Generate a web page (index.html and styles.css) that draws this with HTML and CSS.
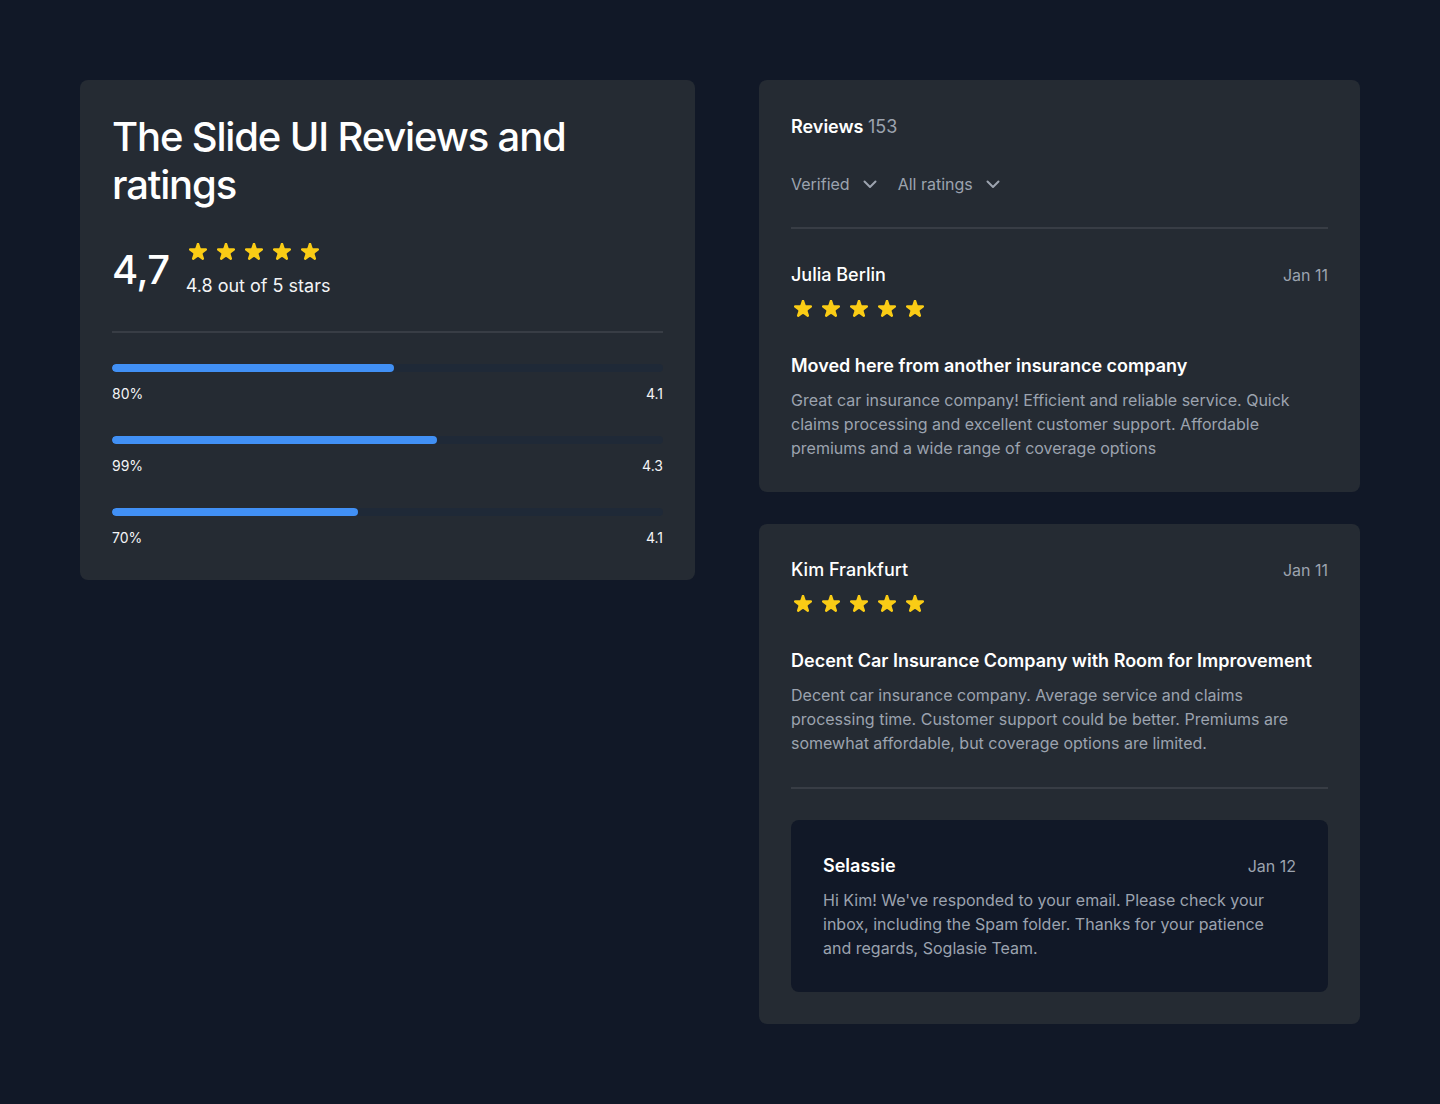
FILE: index.html
```html
<!DOCTYPE html>
<html lang="en">
<head>
<meta charset="utf-8">
<title>Reviews and ratings</title>
<link rel="stylesheet" href="styles.css">
</head>
<body>
<svg width="0" height="0" style="position:absolute">
  <defs>
    <symbol id="star" viewBox="2.2 2.2 15.6 15.6"><path d="M9.05 2.93c.3-.92 1.6-.92 1.9 0l1.07 3.29a1 1 0 0 0 .95.69h3.46c.97 0 1.37 1.24.59 1.81l-2.8 2.03a1 1 0 0 0-.36 1.12l1.07 3.29c.3.92-.76 1.69-1.54 1.12l-2.8-2.030a1 1 0 0 0-1.18 0l-2.8 2.03c-.78.57-1.83-.2-1.54-1.12l1.07-3.29a1 1 0 0 0-.36-1.12L2.98 8.72c-.78-.57-.38-1.81.59-1.81h3.46a1 1 0 0 0 .95-.69l1.07-3.29z"/></symbol>
    <symbol id="chev" viewBox="0 0 20 20"><path d="M4.5 7.5l5.5 5.5 5.5-5.5" fill="none" stroke="currentColor" stroke-width="2" stroke-linecap="round" stroke-linejoin="round"/></symbol>
  </defs>
</svg>
<main class="page">
  <section class="card summary">
    <h1 class="summary-title">The Slide UI Reviews and ratings</h1>
    <div class="score-row">
      <div class="score">4,7</div>
      <div class="score-detail">
        <div class="stars">
          <svg class="star"><use href="#star"/></svg>
          <svg class="star"><use href="#star"/></svg>
          <svg class="star"><use href="#star"/></svg>
          <svg class="star"><use href="#star"/></svg>
          <svg class="star"><use href="#star"/></svg>
        </div>
        <div class="score-text">4.8 out of 5 stars</div>
      </div>
    </div>
    <div class="divider"></div>
    <div class="bars">
      <div class="bar-item">
        <div class="track"><div class="fill" style="width:51.2%"></div></div>
        <div class="bar-labels"><span>80%</span><span>4.1</span></div>
      </div>
      <div class="bar-item">
        <div class="track"><div class="fill" style="width:59%"></div></div>
        <div class="bar-labels"><span>99%</span><span>4.3</span></div>
      </div>
      <div class="bar-item">
        <div class="track"><div class="fill" style="width:44.6%"></div></div>
        <div class="bar-labels"><span>70%</span><span>4.1</span></div>
      </div>
    </div>
  </section>

  <div class="reviews-col">
    <section class="card">
      <h2 class="reviews-head">Reviews <span class="count">153</span></h2>
      <div class="filters">
        <div class="filter">Verified <svg class="chev"><use href="#chev"/></svg></div>
        <div class="filter">All ratings <svg class="chev"><use href="#chev"/></svg></div>
      </div>
      <div class="divider divider-right"></div>
      <article class="review">
        <div class="review-top">
          <span class="name">Julia Berlin</span>
          <span class="date">Jan 11</span>
        </div>
        <div class="stars stars-review">
          <svg class="star"><use href="#star"/></svg>
          <svg class="star"><use href="#star"/></svg>
          <svg class="star"><use href="#star"/></svg>
          <svg class="star"><use href="#star"/></svg>
          <svg class="star"><use href="#star"/></svg>
        </div>
        <h3 class="review-title">Moved here from another insurance company</h3>
        <p class="review-body">Great car insurance company! Efficient and reliable service. Quick claims processing and excellent customer support. Affordable premiums and a wide range of coverage options</p>
      </article>
    </section>

    <section class="card">
      <article class="review">
        <div class="review-top">
          <span class="name">Kim Frankfurt</span>
          <span class="date">Jan 11</span>
        </div>
        <div class="stars stars-review">
          <svg class="star"><use href="#star"/></svg>
          <svg class="star"><use href="#star"/></svg>
          <svg class="star"><use href="#star"/></svg>
          <svg class="star"><use href="#star"/></svg>
          <svg class="star"><use href="#star"/></svg>
        </div>
        <h3 class="review-title">Decent Car Insurance Company with Room for Improvement</h3>
        <p class="review-body">Decent car insurance company. Average service and claims processing time. Customer support could be better. Premiums are somewhat affordable, but coverage options are limited.</p>
      </article>
      <div class="divider divider-reply"></div>
      <div class="reply">
        <div class="review-top">
          <span class="name">Selassie</span>
          <span class="date">Jan 12</span>
        </div>
        <p class="review-body">Hi Kim! We've responded to your email. Please check your inbox, including the Spam folder. Thanks for your patience and regards, Soglasie Team.</p>
      </div>
    </section>
  </div>
</main>
</body>
</html>
```

FILE: styles.css
```css
* { box-sizing: border-box; }
html, body {
  margin: 0;
  padding: 0;
  background: #111827;
  font-family: Inter, "Noto Sans", sans-serif;
  color: #ffffff;
}
.page {
  display: flex;
  align-items: flex-start;
  gap: 64px;
  padding: 80px 80px;
  width: 1440px;
}
.card {
  background: #252b33;
  border-radius: 8px;
  padding: 32px;
}
.summary {
  width: 615px;
  flex: none;
}
.summary-title {
  margin: 1px 0 -1px;
  font-size: 40px;
  line-height: 48px;
  font-weight: 500;
  letter-spacing: -1.15px;
  color: #fff;
  max-width: 520px;
}
.score-row {
  display: flex;
  align-items: center;
  gap: 16px;
  margin-top: 32px;
}
.score {
  font-size: 40px;
  line-height: 48px;
  font-weight: 500;
  letter-spacing: -0.5px;
}
.score-detail {
  display: flex;
  flex-direction: column;
  gap: 8px;
}
.stars {
  display: flex;
  gap: 4px;
  height: 24px;
}
.star {
  width: 24px;
  height: 24px;
  padding: 2.5px;
  fill: #facc15;
}
.score-text {
  font-size: 18px;
  line-height: 28px;
  color: #f3f4f6;
}
.divider {
  height: 2px;
  background: #383d45;
  margin: 31px 0;
}
.bars {
  display: flex;
  flex-direction: column;
  gap: 32px;
}
.bar-item {
  display: flex;
  flex-direction: column;
  gap: 12px;
}
.track {
  height: 8px;
  border-radius: 4px;
  background: #1f2937;
  overflow: hidden;
}
.fill {
  height: 100%;
  border-radius: 4px;
  background: #4190f5;
}
.bar-labels {
  display: flex;
  justify-content: space-between;
  font-size: 14px;
  line-height: 20px;
  color: #f3f4f6;
}
.reviews-col {
  width: 601px;
  flex: none;
  display: flex;
  flex-direction: column;
  gap: 32px;
}
.reviews-head {
  margin: 1px 0 -1px;
  font-size: 18px;
  line-height: 28px;
  font-weight: 600;
  color: #fff;
}
.count {
  font-weight: 400;
  color: #9ca3af;
}
.filters {
  display: flex;
  gap: 18px;
  margin-top: 32px;
}
.filter {
  display: flex;
  align-items: center;
  gap: 10px;
  font-size: 16px;
  line-height: 24px;
  color: #9ca3af;
}
.chev {
  width: 20px;
  height: 20px;
  color: #9ca3af;
}
.divider-right {
  margin: 31px 0 32px;
}
.divider-reply {
  margin: 32px 0 31px;
}
.review-top {
  display: flex;
  justify-content: space-between;
  align-items: center;
}
.name {
  font-size: 18px;
  line-height: 28px;
  font-weight: 500;
  color: #fff;
}
.date {
  font-size: 16px;
  line-height: 24px;
  color: #9ca3af;
  margin-top: -1px;
}
.stars-review {
  margin-top: 8px;
}
.review-title {
  margin: 31px 0 0;
  font-size: 18px;
  line-height: 28px;
  font-weight: 600;
  color: #fff;
}
.review-body {
  margin: 8px 0 0;
  font-size: 16px;
  line-height: 24px;
  color: #9ca3af;
}
.reply {
  background: #111827;
  border-radius: 8px;
  padding: 32px;
}
.reply .name {
  font-weight: 600;
}
```
